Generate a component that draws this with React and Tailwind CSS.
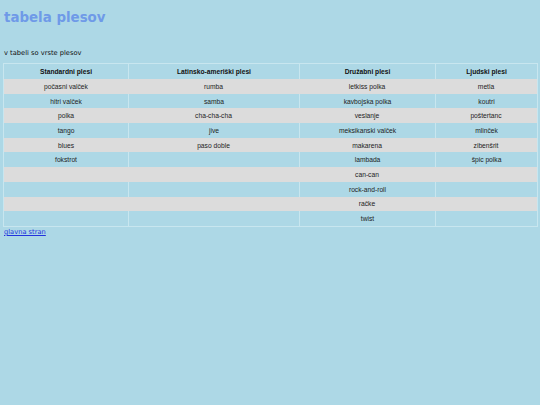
import React from "react";

const rows = [
  ["počasni valček", "rumba", "letkiss polka", "metla"],
  ["hitri valček", "samba", "kavbojska polka", "koutri"],
  ["polka", "cha-cha-cha", "veslanje", "poštertanc"],
  ["tango", "jive", "meksikanski valček", "mlinček"],
  ["blues", "paso doble", "makarena", "zibenšrit"],
  ["fokstrot", "", "lambada", "špic polka"],
  ["", "", "can-can", ""],
  ["", "", "rock-and-roll", ""],
  ["", "", "račke", ""],
  ["", "", "twist", ""],
];

const heads = ["Standardni plesi", "Latinsko-ameriški plesi", "Družabni plesi", "Ljudski plesi"];
const widths = ["w-[124px]", "w-[171px]", "w-[136px]", "w-[102px]"];

export default function App() {
  return (
    <div className="w-[540px] h-[405px] bg-[#add8e6] overflow-hidden leading-[9px]" style={{ fontFamily: '"DejaVu Sans", Verdana, sans-serif' }}>
      <div className="px-[4px] pt-[9px]">
        <h1 className="text-[13.4px] font-bold text-[#6f9ae8] leading-[17px]">tabela plesov</h1>
        <p className="mt-[23px] text-[6.7px] leading-[9px] text-[#111]">v tabeli so vrste plesov</p>
      </div>
      <div className="ml-[3px] mt-[5px] w-[535px] border border-[#c8e6ef]" style={{ fontFamily: '"Liberation Sans", Arial, sans-serif' }}>
        <div className="flex h-[15px] items-center text-[6.7px] font-bold text-[#111]">
          {heads.map((h, i) => (
            <div key={i} className={`${widths[i]} h-full flex items-center justify-center ${i > 0 ? "border-l border-[#c8e6ef]" : ""}`}>{h}</div>
          ))}
        </div>
        {rows.map((r, ri) => {
          const gray = ri % 2 === 0;
          return (
            <div key={ri} className={`flex h-[14.7px] items-center text-[6.7px] text-[#222] ${gray ? "bg-[#dcdcdc]" : ""}`}>
              {r.map((c, ci) => (
                <div key={ci} className={`${widths[ci]} h-full flex items-center justify-center ${ci > 0 && !gray ? "border-l border-[#c8e6ef]" : ""}`}>{c}</div>
              ))}
            </div>
          );
        })}
      </div>
      <div className="px-[4px] pt-[1px] leading-[9px] text-[6.7px]">
        <a href="#" className="text-[6.7px] leading-[9px] text-[#2233dd] underline">glavna stran</a>
      </div>
    </div>
  );
}
